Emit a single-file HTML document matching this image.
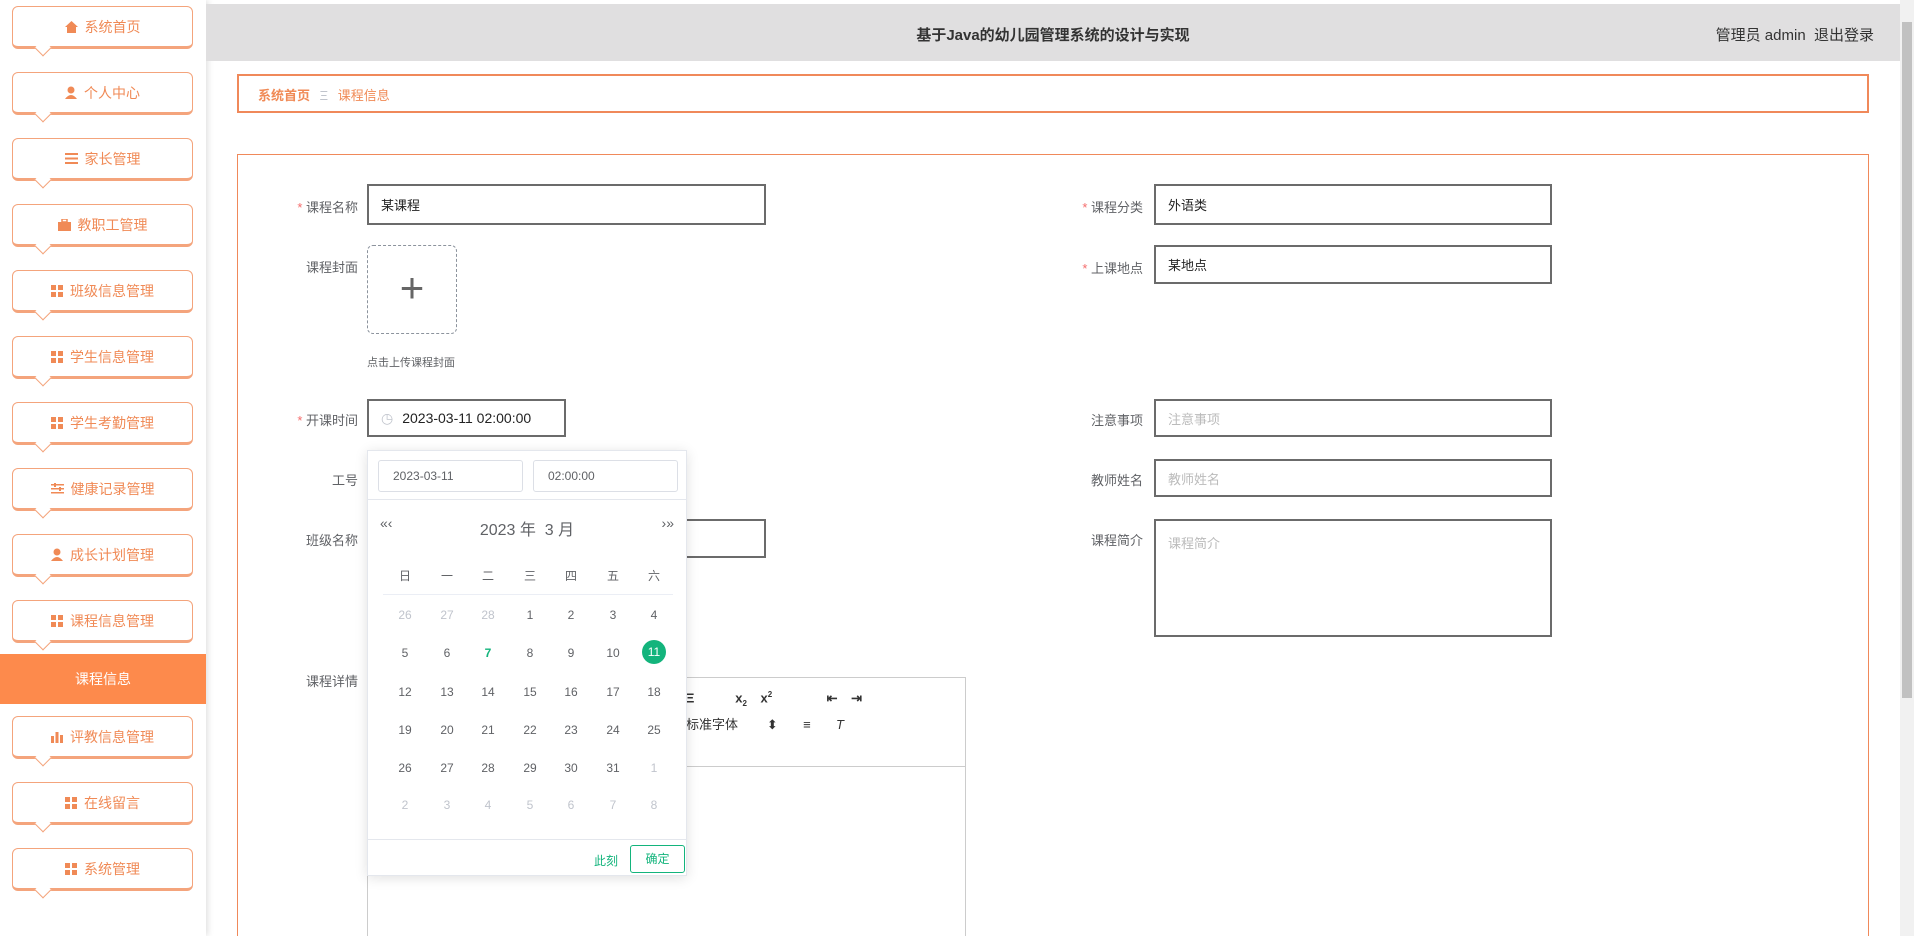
<!DOCTYPE html>
<html style="width:1914px;height:936px;overflow:hidden"><head><meta charset="utf-8"><style>
*{box-sizing:border-box;margin:0;padding:0}
body{width:1914px;height:936px;overflow:hidden;background:#fff;font-family:"Liberation Sans","Noto Sans CJK SC",sans-serif;position:relative;font-size:14px;color:#606266}
.abs{position:absolute}
.side{left:0;top:0;width:206px;height:936px;background:#fff;box-shadow:2px 0 6px rgba(0,0,0,.12)}
.mi{position:absolute;left:12px;width:181px;height:43px;border:1.5px solid #f4a47c;border-bottom:3px solid #f4a47c;border-radius:6px;background:#fff;color:#f08a56;font-size:14px;display:flex;align-items:center;justify-content:center;gap:7px}
.mi:after{content:"";position:absolute;left:24px;bottom:-8px;width:11px;height:11px;background:#fff;border-right:1.5px solid #f4a47c;border-bottom:1.5px solid #f4a47c;transform:rotate(45deg)}
.ic{display:inline-block;width:12px;height:12px;background:linear-gradient(#f08a56,#f08a56) 0 0/5px 5px no-repeat,linear-gradient(#f08a56,#f08a56) 7px 0/5px 5px no-repeat,linear-gradient(#f08a56,#f08a56) 0 7px/5px 5px no-repeat,linear-gradient(#f08a56,#f08a56) 7px 7px/5px 5px no-repeat}
.act{left:0;top:654px;width:206px;height:50px;background:#fd8a4c;color:#fff;font-size:14px;display:flex;align-items:center;justify-content:center}
.hdr{left:206px;top:4px;width:1694px;height:57px;background:#e0dfe0}
.lbl{position:absolute;font-size:13px;color:#606266;text-align:right;width:120px}
.req:before{content:"* ";color:#f56c6c}
.inp{position:absolute;border:2px solid #6b6b6b;background:#fff;font-size:13px;color:#222;padding-left:12px;display:flex;align-items:center}
.ph{color:#bbb}
.cal{left:367px;top:450px;width:320px;height:426px;background:#fff;border:1px solid #e4e7ed;box-shadow:0 2px 12px rgba(0,0,0,.12)}
.d{position:absolute;width:30px;text-align:center;font-size:12px;color:#606266}
.g{color:#c0c4cc}
</style></head><body>
<div class="abs side"></div>
<div class="mi" style="top:6px"><svg width="13" height="12"><path d="M6.5 0 L13 6 H11 V12 H2 V6 H0Z" fill="#f08a56"/></svg>系统首页</div>
<div class="mi" style="top:72px"><svg width="12" height="13"><circle cx="6" cy="4" r="3.5" fill="#f08a56"/><path d="M0 13 Q6 5 12 13Z" fill="#f08a56"/></svg>个人中心</div>
<div class="mi" style="top:138px"><svg width="13" height="11"><rect y="0" width="13" height="2" fill="#f08a56"/><rect y="4.5" width="13" height="2" fill="#f08a56"/><rect y="9" width="13" height="2" fill="#f08a56"/></svg>家长管理</div>
<div class="mi" style="top:204px"><svg width="13" height="12"><rect x="4" y="0" width="5" height="3" fill="none" stroke="#f08a56" stroke-width="1.5"/><rect y="3" width="13" height="9" fill="#f08a56"/></svg>教职工管理</div>
<div class="mi" style="top:270px"><i class="ic"></i>班级信息管理</div>
<div class="mi" style="top:336px"><i class="ic"></i>学生信息管理</div>
<div class="mi" style="top:402px"><i class="ic"></i>学生考勤管理</div>
<div class="mi" style="top:468px"><svg width="13" height="11"><rect y="1" width="13" height="1.5" fill="#f08a56"/><rect y="5" width="13" height="1.5" fill="#f08a56"/><rect y="9" width="13" height="1.5" fill="#f08a56"/><rect x="3" y="0" width="2" height="4" fill="#f08a56"/><rect x="8" y="4" width="2" height="4" fill="#f08a56"/></svg>健康记录管理</div>
<div class="mi" style="top:534px"><svg width="12" height="13"><circle cx="6" cy="4" r="3.5" fill="#f08a56"/><path d="M0 13 Q6 5 12 13Z" fill="#f08a56"/></svg>成长计划管理</div>
<div class="mi" style="top:600px"><i class="ic"></i>课程信息管理</div>
<div class="abs act">课程信息</div>
<div class="mi" style="top:716px"><svg width="12" height="12"><rect x="0" y="5" width="3" height="7" fill="#f08a56"/><rect x="4.5" y="1" width="3" height="11" fill="#f08a56"/><rect x="9" y="4" width="3" height="8" fill="#f08a56"/></svg>评教信息管理</div>
<div class="mi" style="top:782px"><i class="ic"></i>在线留言</div>
<div class="mi" style="top:848px"><i class="ic"></i>系统管理</div>

<div class="abs hdr"></div>
<div class="abs" style="left:206px;top:24px;width:1694px;text-align:center;font-size:15px;font-weight:bold;color:#333">基于Java的幼儿园管理系统的设计与实现</div>
<div class="abs" style="right:40px;top:24px;font-size:15px;color:#333">管理员 admin &nbsp;退出登录</div>
<div class="abs" style="left:1900px;top:0;width:14px;height:936px;background:#f1f1f1"></div>
<div class="abs" style="left:1902px;top:22px;width:10px;height:676px;background:#c1c1c1"></div>

<div class="abs" style="left:237px;top:74px;width:1632px;height:39px;border:2px solid #f0895a"></div>
<div class="abs" style="left:258px;top:85px;font-size:13px;color:#f08a56"><b>系统首页</b> <span style="color:#c0c4cc;margin:0 6px">Ξ</span> 课程信息</div>

<div class="abs" style="left:237px;top:154px;width:1632px;height:782px;border:1px solid #f0895a;border-bottom:none"></div>

<div class="lbl req" style="left:238px;top:197px">课程名称</div>
<div class="inp" style="left:367px;top:184px;width:399px;height:41px">某课程</div>
<div class="lbl req" style="left:1023px;top:197px">课程分类</div>
<div class="inp" style="left:1154px;top:184px;width:398px;height:41px">外语类</div>
<div class="lbl" style="left:238px;top:257px">课程封面</div>
<div class="abs" style="left:367px;top:245px;width:90px;height:89px;border:1px dashed #8c939d;border-radius:6px;text-align:center;line-height:84px;font-size:42px;color:#666;font-weight:200">+</div>
<div class="abs" style="left:367px;top:354px;font-size:11px;color:#606266">点击上传课程封面</div>
<div class="lbl req" style="left:1023px;top:258px">上课地点</div>
<div class="inp" style="left:1154px;top:245px;width:398px;height:39px">某地点</div>

<div class="lbl req" style="left:238px;top:410px">开课时间</div>
<div class="inp" style="left:367px;top:399px;width:199px;height:38px;font-size:14px"><span style="color:#c0c4cc;margin-right:9px">&#9719;</span>2023-03-11 02:00:00</div>
<div class="lbl" style="left:1023px;top:410px">注意事项</div>
<div class="inp" style="left:1154px;top:399px;width:398px;height:38px"><span class="ph">注意事项</span></div>
<div class="lbl" style="left:238px;top:470px">工号</div>
<div class="lbl" style="left:1023px;top:470px">教师姓名</div>
<div class="inp" style="left:1154px;top:459px;width:398px;height:38px"><span class="ph">教师姓名</span></div>
<div class="lbl" style="left:238px;top:530px">班级名称</div>
<div class="inp" style="left:367px;top:519px;width:399px;height:39px"></div>
<div class="lbl" style="left:1023px;top:530px">课程简介</div>
<div class="inp" style="left:1154px;top:519px;width:398px;height:118px;align-items:flex-start;padding-top:12px"><span class="ph">课程简介</span></div>
<div class="lbl" style="left:238px;top:671px">课程详情</div>
<div class="abs" style="left:367px;top:677px;width:599px;height:259px;border:1px solid #ccc;border-bottom:none"></div>
<div class="abs" style="left:367px;top:766px;width:599px;height:1px;background:#ccc"></div>
<div class="abs" style="left:686px;top:690px;font-size:13px;color:#333;font-weight:bold;word-spacing:10px">Ξ &nbsp; x<sub style="font-size:8px">2</sub> x<sup style="font-size:8px">2</sup> &nbsp;&nbsp;&nbsp;⇤ ⇥</div>
<div class="abs" style="left:686px;top:714px;font-size:13px;color:#333">标准字体 &nbsp;&nbsp;&nbsp;&nbsp;&nbsp;&nbsp;&nbsp;⬍ &nbsp;&nbsp;&nbsp;&nbsp;&nbsp;&nbsp;≡ &nbsp;&nbsp;&nbsp;&nbsp;&nbsp;&nbsp;<i>T</i></div>

<div class="abs cal">
 <div class="abs" style="left:10px;top:9px;width:145px;height:32px;border:1px solid #dcdfe6;border-radius:3px;font-size:12px;padding:8px 0 0 14px">2023-03-11</div>
 <div class="abs" style="left:165px;top:9px;width:145px;height:32px;border:1px solid #dcdfe6;border-radius:3px;font-size:12px;padding:8px 0 0 14px">02:00:00</div>
 <div class="abs" style="left:0;top:48px;width:318px;height:1px;background:#e4e7ed"></div>
 <div class="abs" style="left:12px;top:64px;font-size:14px;color:#606266">«‹</div>
 <div class="abs" style="right:12px;top:64px;font-size:14px;color:#606266">›»</div>
 <div class="abs" style="left:0;width:318px;top:65px;text-align:center;font-size:16px;color:#606266">2023 年 &nbsp;3 月</div>
 <div class="abs" style="left:15px;top:143px;width:290px;height:1px;background:#ebeef5"></div>
 <div class="d" style="left:22px;top:116px">日</div><div class="d" style="left:64px;top:116px">一</div><div class="d" style="left:105px;top:116px">二</div><div class="d" style="left:147px;top:116px">三</div><div class="d" style="left:188px;top:116px">四</div><div class="d" style="left:230px;top:116px">五</div><div class="d" style="left:271px;top:116px">六</div>
 <div class="d g" style="left:22px;top:157px">26</div><div class="d g" style="left:64px;top:157px">27</div><div class="d g" style="left:105px;top:157px">28</div><div class="d" style="left:147px;top:157px">1</div><div class="d" style="left:188px;top:157px">2</div><div class="d" style="left:230px;top:157px">3</div><div class="d" style="left:271px;top:157px">4</div>
 <div class="d" style="left:22px;top:195px">5</div><div class="d" style="left:64px;top:195px">6</div><div class="d" style="left:105px;top:195px;color:#13b47c;font-weight:bold">7</div><div class="d" style="left:147px;top:195px">8</div><div class="d" style="left:188px;top:195px">9</div><div class="d" style="left:230px;top:195px">10</div><div class="abs" style="left:274px;top:189px;width:24px;height:24px;border-radius:50%;background:#13b47c;color:#fff;font-size:12px;text-align:center;line-height:24px">11</div>
 <div class="d" style="left:22px;top:234px">12</div><div class="d" style="left:64px;top:234px">13</div><div class="d" style="left:105px;top:234px">14</div><div class="d" style="left:147px;top:234px">15</div><div class="d" style="left:188px;top:234px">16</div><div class="d" style="left:230px;top:234px">17</div><div class="d" style="left:271px;top:234px">18</div>
 <div class="d" style="left:22px;top:272px">19</div><div class="d" style="left:64px;top:272px">20</div><div class="d" style="left:105px;top:272px">21</div><div class="d" style="left:147px;top:272px">22</div><div class="d" style="left:188px;top:272px">23</div><div class="d" style="left:230px;top:272px">24</div><div class="d" style="left:271px;top:272px">25</div>
 <div class="d" style="left:22px;top:310px">26</div><div class="d" style="left:64px;top:310px">27</div><div class="d" style="left:105px;top:310px">28</div><div class="d" style="left:147px;top:310px">29</div><div class="d" style="left:188px;top:310px">30</div><div class="d" style="left:230px;top:310px">31</div><div class="d g" style="left:271px;top:310px">1</div>
 <div class="d g" style="left:22px;top:347px">2</div><div class="d g" style="left:64px;top:347px">3</div><div class="d g" style="left:105px;top:347px">4</div><div class="d g" style="left:147px;top:347px">5</div><div class="d g" style="left:188px;top:347px">6</div><div class="d g" style="left:230px;top:347px">7</div><div class="d g" style="left:271px;top:347px">8</div>
 <div class="abs" style="left:0;top:388px;width:318px;height:1px;background:#e4e7ed"></div>
 <div class="abs" style="left:226px;top:401px;font-size:12px;color:#13b47c">此刻</div>
 <div class="abs" style="left:262px;top:394px;width:55px;height:28px;border:1px solid #13b47c;border-radius:3px;font-size:12px;color:#13b47c;text-align:center;line-height:26px">确定</div>
</div>
</body></html>
